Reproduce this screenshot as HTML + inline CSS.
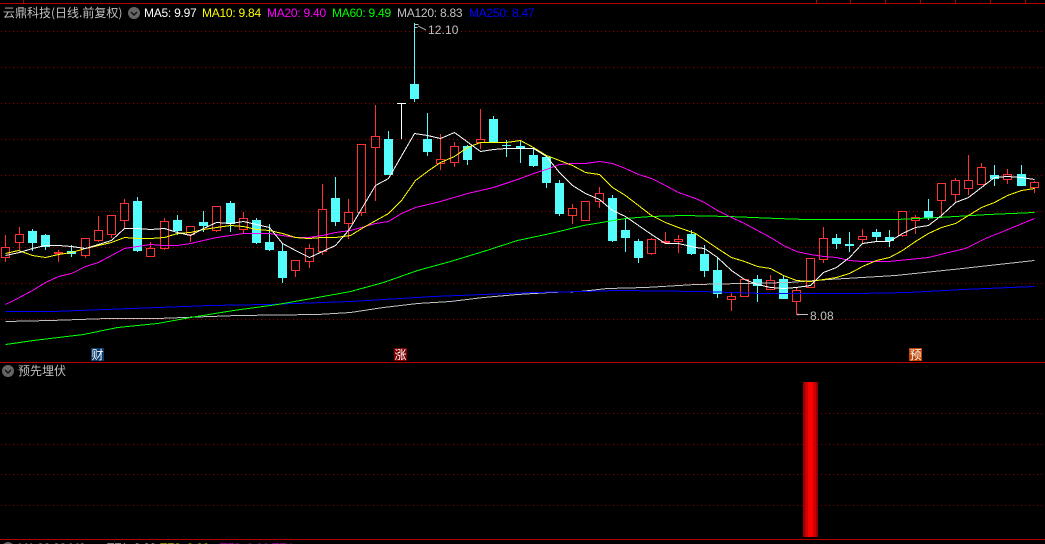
<!DOCTYPE html>
<html><head><meta charset="utf-8">
<style>
html,body{margin:0;padding:0;background:#000;width:1045px;height:544px;overflow:hidden}
#w{position:relative;width:1045px;height:544px;overflow:hidden;background:#000}
svg{position:absolute;left:0;top:0}
.t{position:absolute;white-space:pre;font:12px/14px "Liberation Sans","WenQuanYi Zen Hei",sans-serif;letter-spacing:-.25px}
.n{letter-spacing:.1px}
.c{font-family:"WenQuanYi Zen Hei","Noto Sans CJK SC",sans-serif;color:#c0c0c0;font-size:12px;letter-spacing:0}
.b{position:absolute;width:13px;height:13px;top:348px;color:#fff;font:12px/13px "WenQuanYi Zen Hei","Noto Sans CJK SC",sans-serif;text-align:center}
</style></head><body><div id="w">
<svg width="1045" height="544" viewBox="0 0 1045 544" shape-rendering="crispEdges" fill="none">
<g stroke="#960000" stroke-width="1" stroke-dasharray="1 3">
<path d="M1 31.5H1042"/><path d="M1 67.5H1042"/><path d="M1 103.5H1042"/><path d="M1 139.5H1042"/><path d="M1 175.5H1042"/><path d="M1 211.5H1042"/><path d="M1 247.5H1042"/><path d="M1 283.5H1042"/><path d="M1 319.5H1042"/><path d="M1 413.5H1042"/><path d="M1 444.5H1042"/><path d="M1 474.5H1042"/><path d="M1 505.5H1042"/>
</g>
<g stroke="#b40000">
<path d="M0 3.5H1045M0 362.5H1045M0 539.5H1045M23.5 0V3M816.5 0V3M850.5 0V3M885.5 0V3M920.5 0V3M955.5 0V3M990.5 0V3M1025.5 0V3"/>
</g>
<rect x="803" y="382" width="15" height="155" fill="#990000"/>
<rect x="805" y="382" width="11" height="155" fill="#cc0000"/>
<rect x="808" y="382" width="5" height="155" fill="#ff0000"/>
<path stroke="#54fcfc" d="M32.5 229V251M45.5 234V250M71.5 245V257M137.5 197V252M177.5 215V235M203.5 211V232M230.5 201V232M256.5 218V244M269.5 224V251M282.5 244V283M335.5 177V226M388.5 131V175M414.5 23V102M427.5 113V156M467.5 145V165M493.5 116V143M506.5 140V157M520.5 141V163M533.5 149V167M546.5 157V188M559.5 180V216M612.5 195V242M625.5 218V252M638.5 239V263M691.5 230V255M704.5 245V277M717.5 257V298M757.5 275V302M783.5 275V299M836.5 234V249M849.5 232V252M876.5 229V241M889.5 230V247M928.5 199V220M994.5 165V186M1021.5 165V186"/>
<path fill="#54fcfc" d="M28 231h9v12h-9zM41 235h9v12h-9zM67 251h9v3h-9zM133 201h9v50h-9zM173 220h9v11h-9zM199 222h9v4h-9zM226 203h9v21h-9zM252 220h9v23h-9zM265 242h9v8h-9zM278 251h9v27h-9zM331 198h9v24h-9zM384 139h9v36h-9zM410 84h9v15h-9zM423 139h9v13h-9zM463 146h9v14h-9zM489 119h9v23h-9zM502 145h9v1h-9zM516 146h9v3h-9zM529 155h9v11h-9zM542 157h9v26h-9zM555 183h9v31h-9zM608 198h9v43h-9zM621 230h9v8h-9zM634 241h9v17h-9zM687 234h9v20h-9zM700 254h9v17h-9zM713 270h9v24h-9zM753 279h9v7h-9zM779 279h9v20h-9zM832 238h9v6h-9zM845 244h9v2h-9zM872 232h9v5h-9zM885 237h9v4h-9zM924 211h9v7h-9zM990 175h9v4h-9zM1017 174h9v12h-9z"/>
<path stroke="#ff3232" d="M5.5 235V247M5.5 257V262M1.5 247.5h8v10h-8zM19.5 227V234M19.5 242V250M15.5 234.5h8v8h-8zM85.5 255V258M81.5 238.5h8v17h-8zM98.5 216V230M98.5 240V242M94.5 230.5h8v10h-8zM111.5 234V238M107.5 215.5h8v19h-8zM124.5 199V203M124.5 220V228M120.5 203.5h8v17h-8zM150.5 242V248M150.5 256V257M146.5 248.5h8v8h-8zM164.5 218V221M164.5 248V250M160.5 221.5h8v27h-8zM190.5 234V242M186.5 226.5h8v8h-8zM216.5 230V232M212.5 206.5h8v24h-8zM243.5 212V218M243.5 229V233M239.5 218.5h8v11h-8zM295.5 270V277M291.5 260.5h8v10h-8zM309.5 244V248M309.5 261V268M305.5 248.5h8v13h-8zM322.5 184V209M322.5 251V255M318.5 209.5h8v42h-8zM348.5 199V212M348.5 223V239M344.5 212.5h8v11h-8zM361.5 212V216M357.5 144.5h8v68h-8zM375.5 105V136M375.5 147V201M371.5 136.5h8v11h-8zM440.5 134V159M440.5 163V170M436.5 159.5h8v4h-8zM454.5 142V146M454.5 162V167M450.5 146.5h8v16h-8zM480.5 109V139M480.5 142V149M476.5 139.5h8v3h-8zM572.5 204V208M572.5 215V224M568.5 208.5h8v7h-8zM585.5 220V221M581.5 201.5h8v19h-8zM599.5 187V193M599.5 201V208M595.5 193.5h8v8h-8zM651.5 238V239M651.5 253V255M647.5 239.5h8v14h-8zM665.5 232V243M678.5 235V239M678.5 241V253M674.5 239.5h8v2h-8zM731.5 293V296M731.5 299V311M727.5 296.5h8v3h-8zM740.5 279.5h8v17h-8zM770.5 275V280M770.5 289V290M766.5 280.5h8v9h-8zM796.5 288V290M796.5 301V315M792.5 290.5h8v11h-8zM810.5 287V288M806.5 258.5h8v29h-8zM823.5 227V238M823.5 259V263M819.5 238.5h8v21h-8zM862.5 229V236M862.5 239V244M858.5 236.5h8v3h-8zM902.5 235V237M898.5 211.5h8v24h-8zM915.5 215V217M915.5 220V234M911.5 217.5h8v3h-8zM941.5 200V217M937.5 183.5h8v17h-8zM955.5 178V180M955.5 194V202M951.5 180.5h8v14h-8zM968.5 155V180M968.5 188V195M964.5 180.5h8v8h-8zM981.5 163V167M977.5 167.5h8v17h-8zM1007.5 169V174M1007.5 179V184M1003.5 174.5h8v5h-8zM1034.5 181V182M1034.5 187V193M1030.5 182.5h8v5h-8zM58.5 250V262"/>
<path fill="#ff3232" d="M54 252h9v2h-9zM661 241h9v2h-9z"/>
<path stroke="#fff" d="M401.5 103V139M397 103.5h9"/>
<g transform="translate(.5 .5)">
<polyline stroke="#c0c0c0" points="5,321 50,320 107,318 157,318 183,317 237,315 317,314 350,312 383,307 417,303 450,301 483,297 517,294 550,292 580,291 607,288 645,287 695,284 788,282 828,279 895,275 962,268 1034,260"/>
<polyline stroke="#0000ff" points="5,311 52,311 105,309 157,307 210,305 267,304 350,301 383,299 433,296 483,294 533,292 583,291 617,290 700,291 762,293 855,293 908,292 962,289 1034,286"/>
<polyline stroke="#00ff00" points="5,344 33,340 83,334 117,327 157,323 190,317 233,310 277,304 317,297 350,291 383,282 417,270 450,261 483,251 517,240 550,233 583,225 625,218 650,216 683,215 728,216 777,218 805,219 855,219 895,219 938,217 988,214 1034,212"/>
<polyline stroke="#ff00ff" points="5,304 19,297 32,290 45,282 58,276 71,273 85,266 98,262 111,255 124,248 137,246 150,244 164,245 177,245 190,243 203,240 216,237 230,235 243,233 256,233 269,233 282,235 295,237 308,237 322,235 335,232 350,230 375,223 388,221 401,213 415,207 440,201 467,193 493,187 520,178 533,173 546,169 559,164 572,163 585,163 599,161 612,163 625,168 638,174 651,178 665,185 678,192 695,198 704,202 717,210 731,217 744,223 757,230 770,237 783,245 796,251 810,254 823,256 836,257 849,260 862,261 888,261 908,259 928,257 948,252 965,248 985,238 1005,230 1034,218"/>
<polyline stroke="#ffff00" points="5,253 18,250 32,255 45,257 58,254 71,252 85,248 98,245 111,242 124,237 137,238 150,238 164,237 177,233 190,232 203,229 216,227 230,225 243,226 256,229 269,230 282,233 295,237 308,238 322,237 335,237 350,235 363,227 388,213 401,200 415,180 427,171 440,162 454,156 467,147 480,142 493,142 506,142 520,140 533,147 546,155 559,160 572,165 585,172 599,174 612,187 625,195 638,205 651,215 665,222 678,227 695,233 717,248 731,257 744,261 757,266 770,268 783,275 796,280 810,281 823,279 836,277 849,273 862,266 876,260 889,257 902,250 915,241 928,233 941,227 955,223 968,215 981,207 994,202 1007,195 1021,190 1034,188"/>
<polyline stroke="#ffffff" points="5,255 19,252 32,248 45,245 58,245 71,246 85,248 98,244 111,240 124,228 137,228 150,229 164,228 177,232 190,235 203,228 216,222 230,223 243,221 256,224 269,227 282,243 295,250 309,257 322,251 335,245 348,230 350,227 375,185 388,178 414,133 427,135 440,138 454,132 480,151 493,149 506,148 520,148 533,148 546,156 559,172 572,185 585,193 599,199 612,210 625,216 638,225 651,234 665,243 678,243 695,247 704,248 717,257 731,270 744,279 757,284 770,287 783,288 796,287 810,285 823,272 836,267 849,257 862,243 876,241 889,241 902,233 915,227 928,225 941,215 955,202 968,197 981,187 994,177 1007,176 1021,177 1034,179"/>
</g>
<path stroke="#c0c0c0" d="M414.5 24.5h4M414.5 27.5h3M418 26l8 4M797 314.5h11M798 313.5v2"/>
<g shape-rendering="auto">
<circle cx="134" cy="13" r="6" fill="#666"/>
<path d="M131 12l3 3 3-3" stroke="#111" stroke-width="1.4"/>
<circle cx="8" cy="371" r="6" fill="#666"/>
<path d="M5 370l3 3 3-3" stroke="#111" stroke-width="1.4"/>
<circle cx="8" cy="548" r="6" fill="#666"/>
</g>
</svg>
<div class="t c" style="left:3px;top:6px">云鼎科技(日线.前复权)</div>
<div class="t" style="left:144px;top:6px;color:#fff">MA5: 9.97</div>
<div class="t" style="left:202px;top:6px;color:#ff0">MA10: 9.84</div>
<div class="t" style="left:267px;top:6px;color:#f0f">MA20: 9.40</div>
<div class="t" style="left:332px;top:6px;color:#0f0">MA60: 9.49</div>
<div class="t" style="left:397px;top:6px;color:#c0c0c0">MA120: 8.83</div>
<div class="t" style="left:469px;top:6px;color:#00f">MA250: 8.47</div>
<div class="t n" style="left:428px;top:23px;color:#c0c0c0">12.10</div>
<div class="t n" style="left:810px;top:309px;color:#c0c0c0">8.08</div>
<div class="b" style="left:91px;background:#0b3a6e">财</div>
<div class="b" style="left:394px;background:#800000">涨</div>
<div class="b" style="left:909px;background:#c04000">预</div>
<div class="t c" style="left:18px;top:364px">预先埋伏</div>
<div class="t" style="left:18px;top:541px;color:#c0c0c0">M1:88.88 M2:</div>
<div class="t" style="left:107px;top:541px;color:#fff">TF1: 0.00</div>
<div class="t" style="left:160px;top:541px;color:#ff0">TF2: 0.00</div>
<div class="t" style="left:220px;top:541px;color:#f0f">TF3: 0.00 TF4</div>
</div></body></html>
